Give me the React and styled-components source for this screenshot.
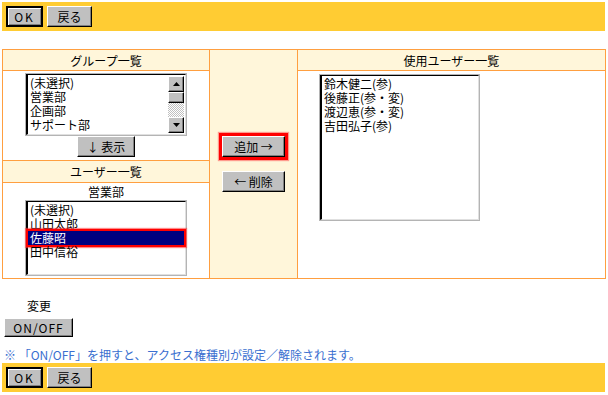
import React from "react";
import styled, { createGlobalStyle, css } from "styled-components";

const Global = createGlobalStyle`
  html, body { margin: 0; padding: 0; background: #fff; }
  body {
    font-family: "Noto Sans CJK JP", "Noto Sans", sans-serif;
    font-size: 12px;
    color: #000;
  }
  * { box-sizing: border-box; }
`;

const YELLOW = "#FFCC33";
const CREAM = "#FFF6DA";
const ORANGE = "#FF9F40";

const Page = styled.div`
  width: 608px;
  padding: 2px 3px 0 2px;
`;

const Bar = styled.div`
  height: 29px;
  background: ${YELLOW};
  display: flex;
  align-items: center;
  gap: 4px;
  padding-left: 4px;
  margin-top: ${(p) => p.$mt || 0}px;
`;

const Btn = styled.button`
  font-family: "Noto Sans CJK JP", sans-serif;
  font-size: 12px;
  line-height: 1;
  color: #000;
  background: #c0c0c0;
  width: ${(p) => p.$w}px;
  height: ${(p) => p.$h || 21}px;
  padding: 0;
  margin: 0;
  border: 1px solid;
  border-color: #fff #000 #000 #fff;
  box-shadow: inset -1px -1px 0 #808080;
  display: flex;
  align-items: center;
  justify-content: center;
  letter-spacing: ${(p) => p.$ls || 0}px;
  ${(p) =>
    p.$default &&
    css`
      outline: 1px solid #000;
      outline-offset: -1px;
      border-width: 2px;
      border-color: #000;
      box-shadow: inset 1px 1px 0 #fff, inset -1px -1px 0 #808080;
    `}
  ${(p) =>
    p.$highlight &&
    css`
      box-shadow: inset -1px -1px 0 #808080, 0 0 0 3px #f00,
        0 0 1px 4px rgba(255, 80, 80, 0.55);
    `}
`;

const Grid = styled.div`
  margin-top: 18px;
  width: 604px;
  display: grid;
  grid-template-columns: 206px 87px 307px;
  grid-template-rows: 20px 89px 21px 95px;
  gap: 1px;
  background: ${ORANGE};
  border: 1px solid ${ORANGE};
`;

const Head = styled.div`
  background: ${CREAM};
  display: flex;
  align-items: center;
  justify-content: center;
  grid-column: ${(p) => p.$col};
  grid-row: ${(p) => p.$row};
`;

const Cell = styled.div`
  background: ${(p) => (p.$cream ? CREAM : "#fff")};
  grid-column: ${(p) => p.$col};
  grid-row: ${(p) => p.$row};
  display: flex;
  flex-direction: column;
  align-items: ${(p) => p.$align || "center"};
  justify-content: ${(p) => p.$justify || "flex-start"};
  padding: ${(p) => p.$pad || "0"};
  gap: ${(p) => p.$gap || 0}px;
`;

const ListBox = styled.div`
  width: ${(p) => p.$w}px;
  height: ${(p) => p.$h}px;
  border: 1px solid #b4b4b4;
  background: #fff;
  display: flex;
  flex-shrink: 0;
`;

const ListInner = styled.div`
  flex: 1;
  display: flex;
  border-left: 2px solid #000;
  border-top: 1px solid #000;
  border-right: 1px solid #e0e0e0;
  border-bottom: 1px solid #e0e0e0;
`;

const Options = styled.div`
  flex: 1;
  padding-top: 1px;
`;

const Option = styled.div`
  height: 14px;
  line-height: 14px;
  padding-left: 2px;
  white-space: nowrap;
  position: relative;
  ${(p) =>
    p.$selected &&
    css`
      background: #000080;
      color: #fff;
      margin-right: 1px;
      box-shadow: 0 0 0 2px #f00, 0 0 1px 3px rgba(255, 60, 60, 0.6);
    `}
`;

const Scroll = styled.div`
  width: 16px;
  display: flex;
  flex-direction: column;
  margin: 1px 1px 1px 0;
`;

const ScrollBtn = styled.div`
  height: ${(p) => p.$h}px;
  background: #c0c0c0;
  border: 1px solid;
  border-color: #fff #000 #000 #fff;
  box-shadow: inset -1px -1px 0 #808080;
  display: flex;
  align-items: center;
  justify-content: center;
`;

const Track = styled.div`
  flex: 1;
  background: repeating-conic-gradient(#c0c0c0 0 25%, #fff 0 50%) 0 0 / 2px 2px;
`;

const Arrow = ({ down }) => (
  <svg width="7" height="4" viewBox="0 0 7 4">
    <polygon points={down ? "0,0 7,0 3.5,4" : "0,4 7,4 3.5,0"} fill="#000" />
  </svg>
);

const Label = styled.div`
  line-height: 14px;
  margin: ${(p) => p.$m || 0};
  padding-left: ${(p) => p.$pl || 0}px;
`;

const Note = styled.div`
  color: #3A6FD0;
  line-height: 15px;
  margin-top: 10px;
  padding-left: 2px;
  white-space: nowrap;
`;

const BtnRow = styled.div`
  margin-top: 5px;
  padding-left: 2px;
`;

const groups = ["(未選択)", "営業部", "企画部", "サポート部"];
const users = ["(未選択)", "山田太郎", "佐藤昭", "田中信裕"];
const members = ["鈴木健二(参)", "後藤正(参・変)", "渡辺恵(参・変)", "吉田弘子(参)"];

export default function App() {
  return (
    <>
      <Global />
      <Page>
        <Bar>
          <Btn $w={37} $default $ls={2}>OK</Btn>
          <Btn $w={45}>戻る</Btn>
        </Bar>

        <Grid>
          <Head $col="1" $row="1">グループ一覧</Head>
          <Cell $col="1" $row="2" $pad="2px 0 0 0">
            <ListBox $w={162} $h={63}>
              <ListInner>
                <Options>
                  {groups.map((g) => (
                    <Option key={g}>{g}</Option>
                  ))}
                </Options>
                <Scroll>
                  <ScrollBtn $h={16}><Arrow /></ScrollBtn>
                  <ScrollBtn $h={11} />
                  <Track />
                  <ScrollBtn $h={16}><Arrow down /></ScrollBtn>
                </Scroll>
              </ListInner>
            </ListBox>
            <Btn $w={58}>↓ 表示</Btn>
          </Cell>
          <Head $col="1" $row="3">ユーザー一覧</Head>
          <Cell $col="1" $row="4" $pad="2px 0 0 0">
            <Label $m="0 0 1px 0">営業部</Label>
            <ListBox $w={162} $h={76}>
              <ListInner>
                <Options>
                  {users.map((u) => (
                    <Option key={u} $selected={u === "佐藤昭"}>{u}</Option>
                  ))}
                </Options>
              </ListInner>
            </ListBox>
          </Cell>

          <Cell $col="2" $row="1 / 5" $cream $justify="center" $gap={14} $pad="0 0 0 0">
            <Btn $w={63} $h={21} $highlight>追加 →</Btn>
            <Btn $w={63} $h={21}>← 削除</Btn>
          </Cell>

          <Head $col="3" $row="1">使用ユーザー一覧</Head>
          <Cell $col="3" $row="2 / 5" $align="flex-start" $pad="3px 0 0 21px">
            <ListBox $w={161} $h={147}>
              <ListInner>
                <Options>
                  {members.map((m) => (
                    <Option key={m}>{m}</Option>
                  ))}
                </Options>
              </ListInner>
            </ListBox>
          </Cell>
        </Grid>

        <Label $m="20px 0 0 0" $pl={25}>変更</Label>
        <BtnRow>
          <Btn $w={69} $h={19} $ls={1}>ON/OFF</Btn>
        </BtnRow>
        <Note>※ 「ON/OFF」を押すと、アクセス権種別が設定／解除されます。</Note>
        <Bar $mt={1}>
          <Btn $w={37} $default $ls={2}>OK</Btn>
          <Btn $w={45}>戻る</Btn>
        </Bar>
      </Page>
    </>
  );
}
